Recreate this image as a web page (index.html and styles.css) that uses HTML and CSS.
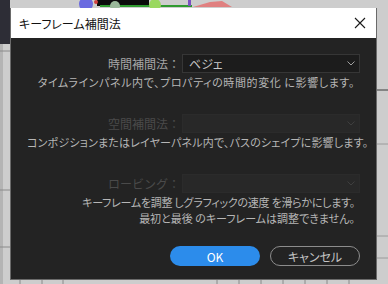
FILE: index.html
```html
<!DOCTYPE html>
<html lang="ja">
<head>
    <meta charset="UTF-8">
    <title>キーフレーム補間法</title>
    <link rel="stylesheet" href="styles.css">
</head>
<body>
    <!-- фон: кусок таймлайна за окном -->
    <svg class="backdrop" width="388" height="284" viewBox="0 0 388 284">
        <rect x="0" y="0" width="388" height="284" fill="#cdcdcd"/>
        <rect x="0" y="0" width="3" height="284" fill="#b4b4b4"/>
        <rect x="0" y="0" width="10" height="44" fill="#2d2d36"/>
        <line x1="0" y1="51" x2="10" y2="51" stroke="#8a8a8a"/>
        <line x1="0" y1="190" x2="10" y2="190" stroke="#8a8a8a"/>
        <line x1="0" y1="247" x2="10" y2="247" stroke="#8a8a8a"/>
        <line x1="377" y1="90" x2="388" y2="90" stroke="#3a3a3a"/>
        <line x1="377" y1="144" x2="388" y2="144" stroke="#9a9a9a"/>
        <line x1="377" y1="236" x2="388" y2="236" stroke="#9a9a9a"/>
        <line x1="377" y1="258" x2="388" y2="258" stroke="#9a9a9a"/>
        <line x1="20" y1="280" x2="20" y2="284" stroke="#8a8a8a"/>
        <line x1="42" y1="280" x2="42" y2="284" stroke="#8a8a8a"/>
        <line x1="63" y1="280" x2="63" y2="284" stroke="#8a8a8a"/>
        <line x1="217" y1="280" x2="217" y2="284" stroke="#8a8a8a"/>
        <line x1="239" y1="280" x2="239" y2="284" stroke="#8a8a8a"/>
        <line x1="261" y1="280" x2="261" y2="284" stroke="#8a8a8a"/>
        <line x1="283" y1="280" x2="283" y2="284" stroke="#8a8a8a"/>
        <line x1="305" y1="280" x2="305" y2="284" stroke="#8a8a8a"/>
        <line x1="327" y1="280" x2="327" y2="284" stroke="#8a8a8a"/>
        <line x1="349" y1="280" x2="349" y2="284" stroke="#8a8a8a"/>
        <rect x="97" y="0" width="52" height="6" fill="#0a0a0a"/>
        <rect x="100" y="5" width="92" height="2" fill="#2f9a2f"/>
        <circle cx="86" cy="4" r="7" fill="#6a6ae0"/>
        <circle cx="96" cy="2" r="2" fill="#d04040"/>
        <circle cx="115" cy="6" r="5" fill="#9ab89a"/>
        <circle cx="155" cy="5" r="6" fill="#9ad860"/>
        <rect x="188" y="0" width="3" height="6" fill="#7a50c0"/>
        <path d="M193 7 L210 2 L222 1 L232 7 Z" fill="#e08080"/>
    </svg>

    <div class="dialog">
        <div class="titlebar">
            <span class="title">キーフレーム補間法</span>
            <svg class="close" width="12" height="12" viewBox="0 0 12 12">
                <path d="M1 1 L11 11 M11 1 L1 11" stroke="#1a1a1a" stroke-width="1.1" fill="none"/>
            </svg>
        </div>
        <div class="content">
            <!-- 1. Время -->
            <div class="section">
                <div class="field">
                    <span class="label">時間補間法：</span>
                    <div class="select">
                        <span>ベジェ</span>
                        <svg class="chevron" width="8" height="5" viewBox="0 0 8 5"><path d="M0.5 0.5 L4 4 L7.5 0.5" stroke="#a0a0a0" fill="none"/></svg>
                    </div>
                </div>
                <p class="desc desc-wide">タイムラインパネル内で、プロパティの時間的変化 に影響します。</p>
            </div>

            <!-- 2. Пространство -->
            <div class="section">
                <div class="field disabled">
                    <span class="label">空間補間法：</span>
                    <div class="select">
                        <span></span>
                        <svg class="chevron" width="8" height="5" viewBox="0 0 8 5"><path d="M0.5 0.5 L4 4 L7.5 0.5" stroke="#3e3e3e" fill="none"/></svg>
                    </div>
                </div>
                <p class="desc desc-loose">コンポジションまたはレイヤーパネル内で、パスのシェイプに影響します。</p>
            </div>

            <!-- 3. Роуминг -->
            <div class="section">
                <div class="field disabled">
                    <span class="label">ロービング：</span>
                    <div class="select">
                        <span></span>
                        <svg class="chevron" width="8" height="5" viewBox="0 0 8 5"><path d="M0.5 0.5 L4 4 L7.5 0.5" stroke="#3e3e3e" fill="none"/></svg>
                    </div>
                </div>
                <p class="desc desc-two"><span class="tight">キーフレームを調整 しグラフィックの速度 を滑らかにします。</span><br>最初と最後 のキーフレームは調整できません。</p>
            </div>

            <div class="buttons">
                <button class="btn btn-ok">OK</button>
                <button class="btn btn-cancel">キャンセル</button>
            </div>
        </div>
    </div>
</body>
</html>
```

FILE: styles.css
```css
* {
    margin: 0;
    padding: 0;
    box-sizing: border-box;
}

html, body {
    width: 388px;
    height: 284px;
    overflow: hidden;
}

body {
    padding: 8px 0 0 10px;
    font-family: "Noto Sans CJK JP", "Noto Sans", sans-serif;
    background: #cdcdcd;
    position: relative;
}

.backdrop {
    position: absolute;
    left: 0;
    top: 0;
}

.dialog {
    position: relative;
    width: 367px;
    height: 272px;
    border: 1px solid #6a6a6a;
    border-top: none;
    background: #232323;
    display: flex;
    flex-direction: column;
}

.titlebar {
    height: 30px;
    flex: none;
    background: #ffffff;
    display: flex;
    align-items: center;
    justify-content: space-between;
    padding: 0 10px 0 8px;
}

.title {
    font-size: 12px;
    color: #111;
    font-feature-settings: "palt";
}

.content {
    flex: 1;
    padding: 16px 16px 0 16px;
    display: flex;
    flex-direction: column;
    gap: 25px;
}

.field {
    display: flex;
    align-items: center;
    height: 19px;
}

.label {
    width: 153px;
    text-align: right;
    font-size: 12px;
    color: #a6a6a6;
    white-space: nowrap;
}

.select {
    flex: 1;
    margin-left: 2px;
    height: 19px;
    background: #1c1c1c;
    border: 1px solid #363636;
    display: flex;
    align-items: center;
    justify-content: space-between;
    padding: 0 4px 0 6px;
    font-size: 12px;
    color: #c8c8c8;
    font-feature-settings: "palt";
}

.disabled .label {
    color: #4a4a4a;
}

.disabled .select {
    background: #282828;
    border-color: #2b2b2b;
}

.desc {
    margin-top: 2px;
    padding-right: 5px;
    text-align: right;
    font-size: 11px;
    line-height: 14px;
    color: #b6b6b6;
    white-space: nowrap;
    font-feature-settings: "palt";
}

.desc-wide {
    letter-spacing: 0.6px;
}

.desc-loose {
    letter-spacing: 0.18px;
}

.desc-two {
    margin-top: 1px;
    line-height: 16px;
}

.tight {
    letter-spacing: -0.25px;
}

.buttons {
    display: flex;
    justify-content: flex-end;
    gap: 10px;
    margin-top: -5px;
}

.btn {
    width: 90px;
    height: 20px;
    border-radius: 10px;
    font-family: inherit;
    font-size: 12px;
    cursor: pointer;
}

.btn-ok {
    background: #2c8ceb;
    border: none;
    color: #ffffff;
}

.btn-cancel {
    background: transparent;
    border: 1px solid #8c8c8c;
    color: #c4c4c4;
    font-feature-settings: "palt";
}
```
